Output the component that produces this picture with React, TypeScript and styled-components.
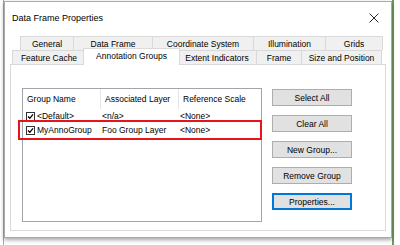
import React from "react";
import styled, { createGlobalStyle } from "styled-components";

const GlobalStyle = createGlobalStyle`
  html, body {
    margin: 0;
    padding: 0;
    width: 400px;
    height: 245px;
    overflow: hidden;
    background: linear-gradient(to right, #fff 0 3px, #c8a65a 3px 4px, #fff 4px 392px, #6f9a5e 392px 394px, #fff 394px);
    font-family: "Liberation Sans", Arial, sans-serif;
  }
`;

const Page = styled.div`
  padding: 1px 0 0 4px;
`;

const Window = styled.div`
  width: 386px;
  height: 235px;
  background: #fff;
  border: 1px solid #a9a9a9;
  box-shadow: 0 2px 4px rgba(0, 0, 0, 0.35);
  display: flex;
  flex-direction: column;
`;

const TitleBar = styled.div`
  height: 32px;
  display: flex;
  align-items: center;
  justify-content: space-between;
  padding: 0 7px 0 7px;
  font-size: 9px;
  color: #000;
`;

const CloseBtn = styled.div`
  width: 12px;
  height: 12px;
  display: flex;
  align-items: center;
  justify-content: center;
  margin-right: 4px;
`;

const Body = styled.div`
  flex: 1;
  display: flex;
  flex-direction: column;
  padding: 2px 5px 6px 5px;
`;

const TabRow = styled.div<{ $offset: number }>`
  display: flex;
  height: 14px;
  margin-left: ${(p) => p.$offset}px;
  position: relative;
`;

const Tab = styled.div<{ $w: number; $active?: boolean }>`
  width: ${(p) => p.$w}px;
  flex: none;
  box-sizing: border-box;
  border: 1px solid #d9d9d9;
  border-bottom: none;
  margin-left: -1px;
  background: ${(p) => (p.$active ? "#fff" : "#f0f0f0")};
  font-size: 8.5px;
  color: #000;
  display: flex;
  align-items: center;
  justify-content: center;
  white-space: nowrap;
  ${(p) =>
    p.$active &&
    `
    position: relative;
    z-index: 2;
    height: 17px;
    margin-top: -2px;
    margin-bottom: -1px;
    margin-left: -3px;
    margin-right: -2px;
    width: ${p.$w + 4}px;
    padding-bottom: 2px;
  `}
`;

const Panel = styled.div`
  flex: 1;
  border: 1px solid #d9d9d9;
  background: #fff;
  display: flex;
  gap: 10px;
  padding: 23px 0 0 11px;
  position: relative;
  z-index: 1;
`;

const ListBox = styled.div`
  width: 240px;
  height: 134px;
  box-sizing: border-box;
  border: 1px solid #a0a4ab;
  background: #fff;
  font-size: 8.5px;
  color: #000;
  padding-top: 0;
`;

const HeaderRow = styled.div`
  display: grid;
  grid-template-columns: 78px 78px 1fr;
  height: 20px;
`;

const HeaderCell = styled.div<{ $last?: boolean }>`
  display: flex;
  align-items: center;
  padding-left: 4px;
  border-right: ${(p) => (p.$last ? "none" : "1px solid #e5e5e5")};
  white-space: nowrap;
  overflow: hidden;
`;

const Row = styled.div<{ $marked?: boolean }>`
  display: grid;
  grid-template-columns: 78px 78px 1fr;
  height: 14px;
  align-items: center;
  margin: 0 2px 0 -2px;
  padding-left: 2px;
  box-sizing: border-box;
  outline: ${(p) => (p.$marked ? "2px solid #e8141b" : "none")};
  outline-offset: 1px;
`;

const NameCell = styled.div`
  display: flex;
  align-items: center;
  gap: 2px;
  padding-left: 3px;
  white-space: nowrap;
`;

const Cell = styled.div`
  white-space: nowrap;
  padding-left: 1px;
`;

const Check = styled.span`
  width: 9px;
  height: 9px;
  box-sizing: border-box;
  border: 1px solid #333;
  background: #fff;
  display: inline-flex;
  align-items: center;
  justify-content: center;
`;

const ButtonCol = styled.div`
  display: flex;
  flex-direction: column;
  gap: 9px;
  padding-top: 1px;
`;

const Button = styled.div<{ $focus?: boolean }>`
  width: 80px;
  height: 17px;
  box-sizing: border-box;
  background: #e1e1e1;
  border: 1px solid ${(p) => (p.$focus ? "#0078d7" : "#adadad")};
  box-shadow: ${(p) => (p.$focus ? "inset 0 0 0 1px #0078d7" : "none")};
  font-size: 8.5px;
  color: #000;
  display: flex;
  align-items: center;
  justify-content: center;
`;

const tabsBack = [
  { label: "General", w: 54 },
  { label: "Data Frame", w: 80 },
  { label: "Coordinate System", w: 102 },
  { label: "Illumination", w: 73 },
  { label: "Grids", w: 58 },
];

const tabsFront = [
  { label: "Feature Cache", w: 74 },
  { label: "Annotation Groups", w: 93, active: true },
  { label: "Extent Indicators", w: 80 },
  { label: "Frame", w: 46 },
  { label: "Size and Position", w: 81 },
];

const groups = [
  { name: "<Default>", layer: "<n/a>", scale: "<None>" },
  { name: "MyAnnoGroup", layer: "Foo Group Layer", scale: "<None>", marked: true },
];

const buttons = ["Select All", "Clear All", "New Group...", "Remove Group", "Properties..."];

const CheckMark = () => (
  <svg width="7" height="7" viewBox="0 0 7 7">
    <path d="M1 3.5 L2.8 5.3 L6 1.3" fill="none" stroke="#000" strokeWidth="1.3" />
  </svg>
);

export default function App() {
  return (
    <>
      <GlobalStyle />
      <Page>
        <Window>
          <TitleBar>
            <span>Data Frame Properties</span>
            <CloseBtn>
              <svg width="10" height="10" viewBox="0 0 10 10">
                <path d="M0.5 0.5 L9.5 9.5 M9.5 0.5 L0.5 9.5" stroke="#111" strokeWidth="0.9" />
              </svg>
            </CloseBtn>
          </TitleBar>
          <Body>
            <TabRow $offset={11}>
              {tabsBack.map((t) => (
                <Tab key={t.label} $w={t.w}>
                  {t.label}
                </Tab>
              ))}
            </TabRow>
            <TabRow $offset={3} style={{ zIndex: 2 }}>
              {tabsFront.map((t) => (
                <Tab key={t.label} $w={t.w} $active={t.active}>
                  {t.label}
                </Tab>
              ))}
            </TabRow>
            <Panel>
              <ListBox>
                <HeaderRow>
                  <HeaderCell>Group Name</HeaderCell>
                  <HeaderCell>Associated Layer</HeaderCell>
                  <HeaderCell $last>Reference Scale</HeaderCell>
                </HeaderRow>
                {groups.map((g) => (
                  <Row key={g.name} $marked={g.marked}>
                    <NameCell>
                      <Check>
                        <CheckMark />
                      </Check>
                      {g.name}
                    </NameCell>
                    <Cell>{g.layer}</Cell>
                    <Cell>{g.scale}</Cell>
                  </Row>
                ))}
              </ListBox>
              <ButtonCol>
                {buttons.map((b) => (
                  <Button key={b} $focus={b === "Properties..."}>
                    {b}
                  </Button>
                ))}
              </ButtonCol>
            </Panel>
          </Body>
        </Window>
      </Page>
    </>
  );
}
